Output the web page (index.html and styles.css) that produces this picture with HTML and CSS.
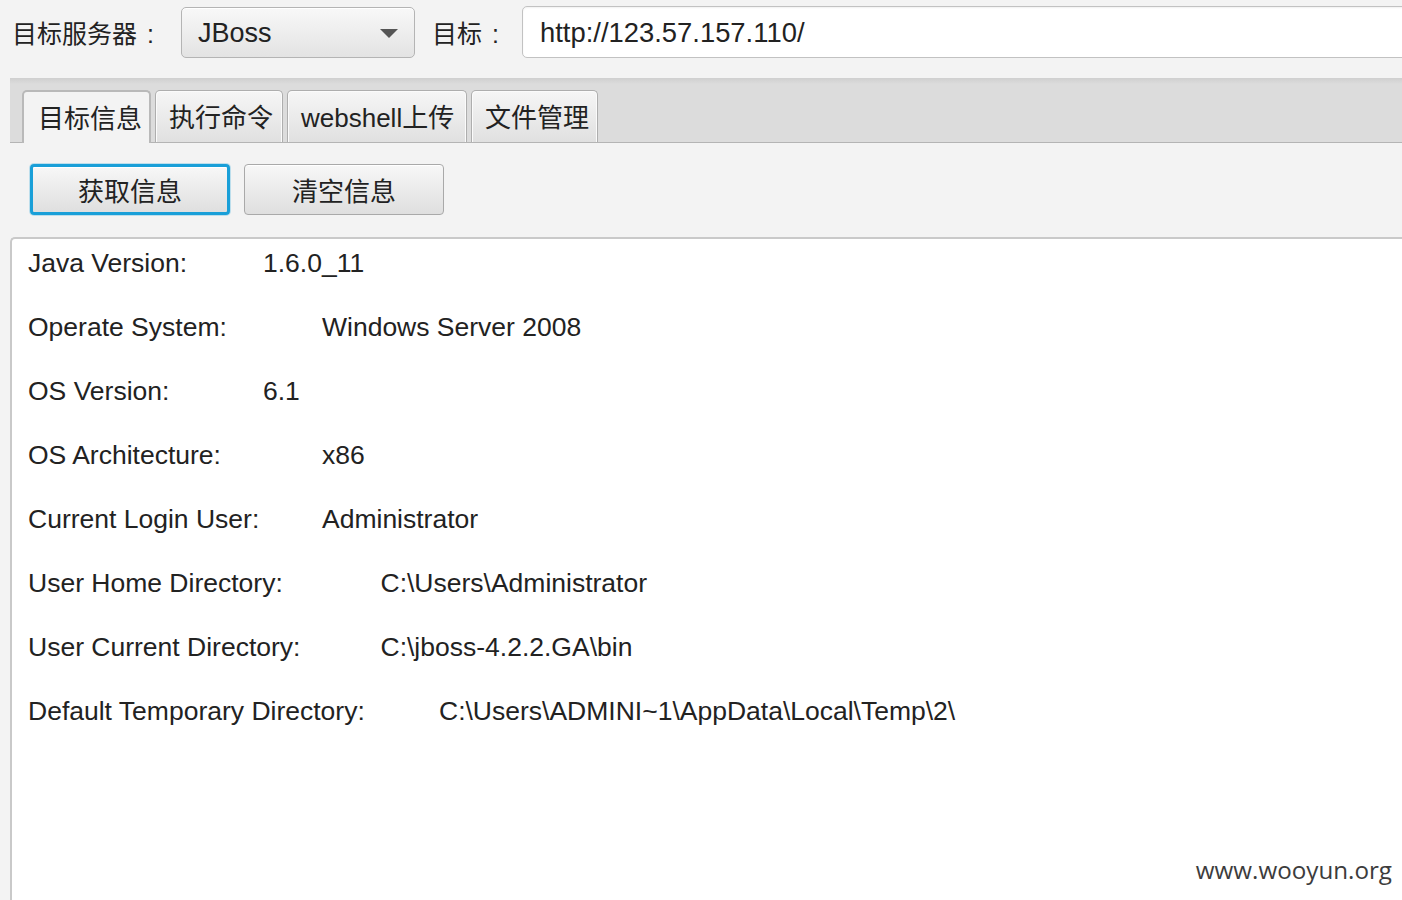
FILE: index.html
```html
<!DOCTYPE html>
<html lang="zh-CN">
<head>
<meta charset="utf-8">
<title>JBoss</title>
<link rel="stylesheet" href="styles.css">
</head>
<body>
<div class="top">
  <div class="lbl lbl-server">目标服务器<span class="colon">:</span></div>
  <div class="combo">
    <span class="combo-text">JBoss</span>
    <svg class="arrow" width="18" height="9" viewBox="0 0 18 9"><path d="M0 0 L18 0 L9 9 Z" fill="#555"/></svg>
  </div>
  <div class="lbl lbl-target">目标<span class="colon">:</span></div>
  <div class="url">http://123.57.157.110/</div>
</div>
<div class="tabbar">
  <div class="tab selected">目标信息</div>
  <div class="tab">执行命令</div>
  <div class="tab">webshell上传</div>
  <div class="tab">文件管理</div>
</div>
<div class="actions">
  <button class="btn focused">获取信息</button>
  <button class="btn">清空信息</button>
</div>
<div class="content">
  <div class="row"><span class="key w4">Java Version:</span><span class="val">1.6.0_11</span></div>
  <div class="row"><span class="key w5">Operate System:</span><span class="val">Windows Server 2008</span></div>
  <div class="row"><span class="key w4">OS Version:</span><span class="val">6.1</span></div>
  <div class="row"><span class="key w5">OS Architecture:</span><span class="val">x86</span></div>
  <div class="row"><span class="key w5">Current Login User:</span><span class="val">Administrator</span></div>
  <div class="row"><span class="key w6">User Home Directory:</span><span class="val">C:\Users\Administrator</span></div>
  <div class="row"><span class="key w6">User Current Directory:</span><span class="val">C:\jboss-4.2.2.GA\bin</span></div>
  <div class="row"><span class="key w7">Default Temporary Directory:</span><span class="val">C:\Users\ADMINI~1\AppData\Local\Temp\2\</span></div>
</div>
<div class="watermark">www.wooyun.org</div>
</body>
</html>
```

FILE: styles.css
```css
html, body {
  margin: 0;
  padding: 0;
  height: 100%;
  overflow: hidden;
}
body {
  background: #f3f3f3;
  font-family: "Liberation Sans", "Noto Sans CJK SC", sans-serif;
  color: #222;
  position: relative;
}
.top {
  height: 78px;
  box-sizing: border-box;
  padding: 6px 0 0 12px;
  display: flex;
  align-items: flex-start;
}
.lbl {
  font-family: "Noto Sans CJK SC", sans-serif;
  font-size: 25px;
  line-height: 52px;
  height: 52px;
  color: #222;
  white-space: nowrap;
}
.colon {
  font-family: "Liberation Sans", sans-serif;
  margin-left: 10px;
}
.lbl-server { width: 169px; }
.lbl-target { width: 90px; margin-left: 17px; }
.combo {
  width: 234px;
  height: 51px;
  margin-top: 1px;
  box-sizing: border-box;
  border: 1px solid #b4b4b4;
  border-radius: 5px;
  background: linear-gradient(#f8f8f8, #e3e3e3);
  box-shadow: inset 0 1px 0 #fff;
  display: flex;
  align-items: center;
  justify-content: space-between;
  padding: 2px 16px 0 16px;
}
.combo-text {
  font-size: 27px;
  color: #222;
}
.arrow { display: block; margin-top: -1px; }
.url {
  flex: 1;
  margin-right: -12px;
  height: 52px;
  box-sizing: border-box;
  border: 1px solid #c2c2c2;
  border-radius: 5px;
  background: #fff;
  font-size: 27.4px;
  line-height: 52px;
  padding-left: 17px;
  color: #222;
  box-shadow: inset 0 1px 2px rgba(0,0,0,0.06);
}
.tabbar {
  margin-left: 10px;
  height: 65px;
  box-sizing: border-box;
  background: linear-gradient(#cfcfcf, #dcdcdc 6px, #dcdcdc);
  border-bottom: 1px solid #b4b4b4;
  display: flex;
  align-items: flex-end;
  gap: 4px;
  padding-left: 12px;
}
.tab {
  font-family: "Liberation Sans", "Noto Sans CJK SC", sans-serif;
  font-size: 26px;
  height: 52px;
  line-height: 55px;
  box-sizing: border-box;
  padding: 0 13px;
  border: 1px solid #aeaeae;
  border-bottom: none;
  border-radius: 5px 5px 0 0;
  background: linear-gradient(#f6f6f6, #e0e0e0);
  box-shadow: inset 1px 1px 0 #fbfbfb, inset -1px 0 0 #fbfbfb;
  color: #222;
  white-space: nowrap;
}
.tab:nth-child(1) { width: 129px; }
.tab:nth-child(2) { width: 128px; }
.tab:nth-child(3) { width: 180px; }
.tab:nth-child(4) { width: 127px; }
.tab.selected {
  background: #f3f3f3;
  border-color: #b9b9b9;
  border-width: 2px;
  height: 53px;
  margin-bottom: -1px;
  padding-left: 14px;
  box-shadow: none;
}
.actions {
  display: flex;
  gap: 14px;
  padding: 21px 0 0 30px;
  height: 94px;
  box-sizing: border-box;
}
.btn {
  width: 200px;
  height: 51px;
  box-sizing: border-box;
  border: 1px solid #a9a9a9;
  border-radius: 4px;
  background: linear-gradient(#f7f7f7, #dfdfdf);
  box-shadow: inset 0 1px 0 #fff;
  font-family: "Noto Sans CJK SC", sans-serif;
  font-size: 26px;
  color: #222;
  padding: 0;
  margin: 0;
  line-height: 1;
}
.btn.focused {
  border: 3px solid #199fd8;
  box-shadow: 0 0 0 1px rgba(25,159,216,0.25), inset 0 1px 0 #fff;
}
.content {
  margin-left: 10px;
  height: 700px;
  background: #fff;
  border-top: 2px solid #c9c9c9;
  border-left: 2px solid #c9c9c9;
  border-top-left-radius: 5px;
  padding: 8px 0 0 16px;
  box-sizing: border-box;
}
.row {
  display: flex;
  font-size: 26.5px;
  line-height: 32px;
  height: 32px;
  margin-bottom: 32px;
  color: #222;
  white-space: nowrap;
}
.key { flex: none; }
.w4 { width: 235px; }
.w5 { width: 294px; }
.w6 { width: 352.5px; }
.w7 { width: 411px; }
.watermark {
  position: absolute;
  right: 10px;
  top: 853px;
  font-family: "Open Sans", sans-serif;
  font-size: 24.2px;
  color: #3c3c3c;
}
```
